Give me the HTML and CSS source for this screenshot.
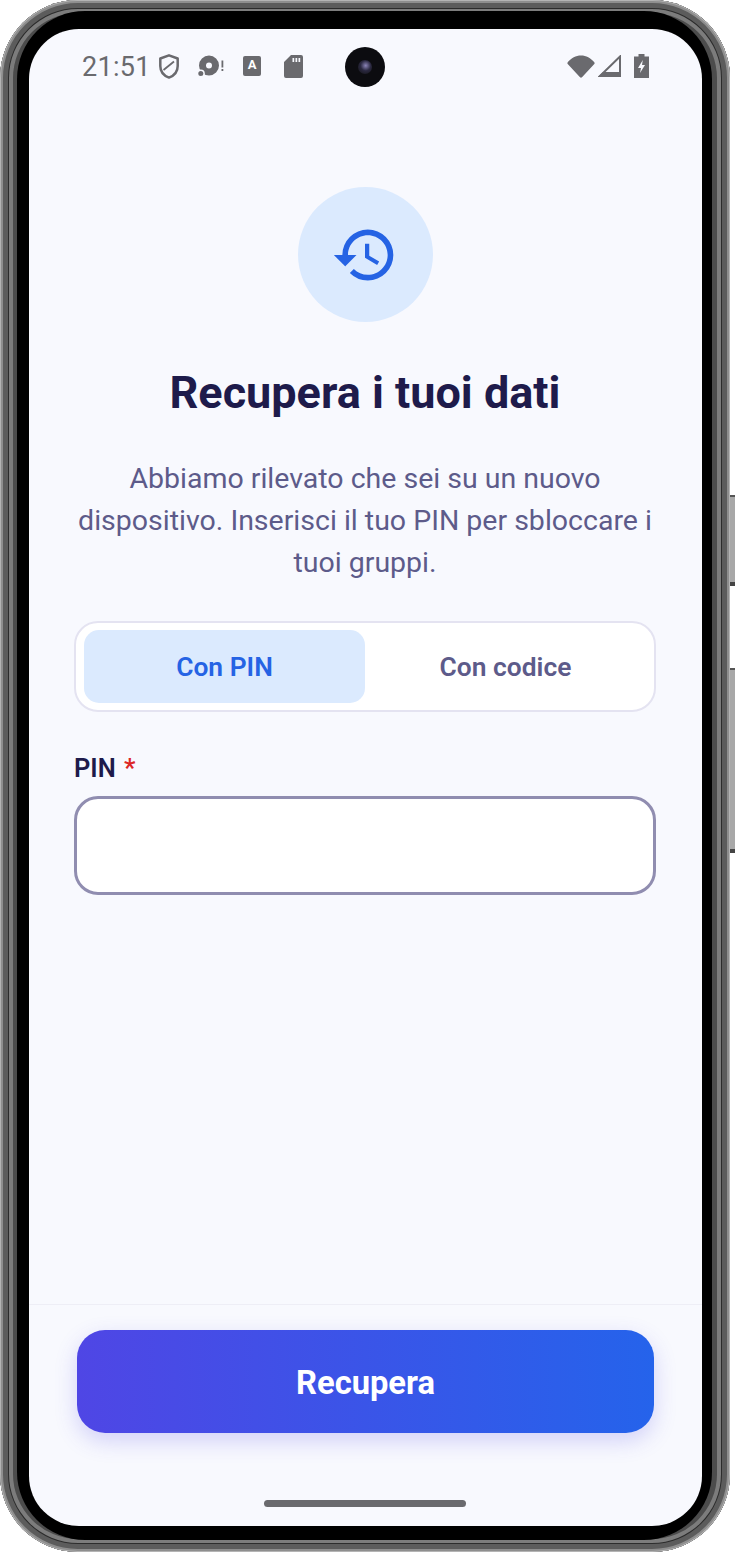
FILE: index.html
```html
<!DOCTYPE html>
<html lang="it">
<head>
<meta charset="utf-8">
<title>Recupera i tuoi dati</title>
<link rel="stylesheet" href="styles.css">
</head>
<body>
<div class="phone">
  <span class="side-btn side-btn-power"></span>
  <span class="side-btn side-btn-volume"></span>
  <div class="bezel">
    <div class="screen">
      <span class="camera"><span class="lens"></span></span>
      <header class="statusbar">
        <div class="status-left">
          <span class="time">21:51</span>
          <svg class="si si-shield" viewBox="0 0 20 25"><path d="M10 1.300 18.700 4.500V12c0 5.600-3.600 9.700-8.700 11.600C4.900 21.700 1.300 17.600 1.300 12V4.500Z" fill="none" stroke="#6a6a6e" stroke-width="2.500" stroke-linejoin="round"/><path d="M4.500 16 15 7.500" stroke="#6a6a6e" stroke-width="1.800" fill="none"/></svg>
          <svg class="si si-disc" viewBox="0 0 26 24"><path fill-rule="evenodd" d="M11 1.500a10 10 0 1 1 0 20 10 10 0 0 1 0-20Zm0 7a3 3 0 1 0 0 6 3 3 0 0 0 0-6Z" fill="#6a6a6e"/><circle cx="2.800" cy="19.500" r="4" fill="#f8f9fe"/><circle cx="2.800" cy="19.500" r="2.500" fill="#6a6a6e"/><rect x="23.500" y="6.500" width="1.800" height="7" fill="#6a6a6e"/><rect x="23.500" y="15" width="1.800" height="2" fill="#6a6a6e"/></svg>
          <span class="si-a">A</span>
          <svg class="si si-sd" viewBox="0 0 19 23"><path fill="#6a6a6e" fill-rule="evenodd" d="M7 0h10a2 2 0 0 1 2 2v19a2 2 0 0 1-2 2H2a2 2 0 0 1-2-2V7Zm1.500 3v4h1.700V3Zm3 0v4h1.700V3Zm3 0v4h1.700V3Z"/></svg>
        </div>
        <div class="status-right">
          <svg class="si si-wifi" viewBox="0 0 28 23"><path d="M.7 7.200C4.300 3 8.800.5 14 .5s9.700 2.500 13.300 6.700c.5.600.5 1.200 0 1.800L15 22.200c-.5.600-1.500.6-2 0L.7 9c-.5-.6-.5-1.200 0-1.800Z" fill="#6a6a6e"/></svg>
          <svg class="si si-signal" viewBox="0 0 23 22"><path d="M2 21 22 1.500V21Z" fill="none" stroke="#6a6a6e" stroke-width="2"/><path d="M0 22h23v-5H5Z" fill="#6a6a6e"/></svg>
          <svg class="si si-battery" viewBox="0 0 15 24"><path fill="#6a6a6e" fill-rule="evenodd" d="M4.500 0h6v2.500H15V24H0V2.500h4.500ZM8.800 6 4 14h3l-1 5 5-8H8Z"/></svg>
        </div>
      </header>

      <main class="content">
        <div class="hero-icon">
          <svg viewBox="0 0 24 24" class="history"><path fill="#2563e4" d="M13 3a9 9 0 0 0-9 9H1l3.890 3.890.07.14L9 12H6c0-3.870 3.130-7 7-7s7 3.130 7 7-3.130 7-7 7c-1.930 0-3.680-.79-4.940-2.060l-1.420 1.420A8.954 8.954 0 0 0 13 21a9 9 0 0 0 0-18zm-1 5v5l4.280 2.540.72-1.210-3.500-2.080V8H12z"/></svg>
        </div>
        <h1 class="title">Recupera i tuoi dati</h1>
        <p class="desc">Abbiamo rilevato che sei su un nuovo dispositivo. Inserisci il tuo PIN per sbloccare i tuoi gruppi.</p>
        <div class="tabs">
          <div class="tab tab-active">Con PIN</div>
          <div class="tab">Con codice</div>
        </div>
        <label class="field-label" for="pin">PIN <span class="req">*</span></label>
        <input id="pin" class="field-input" type="text">
      </main>

      <footer class="footer">
        <button class="cta" type="button">Recupera</button>
        <span class="home-bar"></span>
      </footer>
    </div>
  </div>
</div>
</body>
</html>
```

FILE: styles.css
```css
* { box-sizing: border-box; }
html, body { margin: 0; padding: 0; background: #fff; }
body { width: 735px; height: 1553px; overflow: hidden; font-family: Roboto, "Liberation Sans", sans-serif; }

.phone {
  position: relative;
  width: 730px;
  height: 1552px;
  padding: 11px 18px 12px 17px;
  border-radius: 78px;
  background: #4c4c4c;
  box-shadow:
    inset 0 0 0 1px #b4b4b4,
    inset 0 0 0 3px #8e8e8e,
    inset 0 0 0 8px #5c5c5c,
    inset 0 0 0 9px #2c2c2c,
    inset 0 0 0 13px #7c7c7c;
}
.side-btn {
  position: absolute;
  left: 730px;
  width: 5px;
  background: #a8a8a8;
  border-top: 2px solid #555;
  border-bottom: 4px solid #444;
}
.side-btn-power { top: 495px; height: 91px; }
.side-btn-volume { top: 668px; height: 185px; }

.bezel {
  height: 100%;
  padding: 18px 10px 14px 12px;
  border-radius: 68px;
  background: #000;
}
.screen {
  position: relative;
  display: flex;
  flex-direction: column;
  height: 100%;
  border-radius: 50px;
  background: #f8f9fe;
  overflow: hidden;
}
.camera {
  position: absolute;
  top: 18px;
  left: 316px;
  width: 40px;
  height: 40px;
  border-radius: 50%;
  background: #0c0c10;
  display: flex;
  align-items: center;
  justify-content: center;
}
.lens {
  width: 14px;
  height: 14px;
  border-radius: 50%;
  background: radial-gradient(circle at 55% 40%, #8b84b8 0, #2a2840 45%, #111 100%);
}

.statusbar {
  display: flex;
  justify-content: space-between;
  align-items: flex-start;
  height: 76px;
  padding: 21px 53px 0 53px;
}
.status-left, .status-right { display: flex; align-items: center; height: 32px; }
.time { width: 64px; padding-top: 1px; font-size: 27px; color: #6a6a6e; line-height: 32px; letter-spacing: .3px; }
.si { display: block; flex: none; }
.si-shield { width: 20px; height: 25px; margin-left: 13px; }
.si-disc { width: 26px; height: 24px; margin-left: 19px; }
.si-a {
  width: 18px;
  height: 20px;
  margin-left: 19px;
  border-radius: 2px;
  background: #6a6a6e;
  color: #fff;
  font-size: 13px;
  font-weight: 700;
  line-height: 18px;
  text-align: center;
}
.si-sd { width: 19px; height: 23px; margin-left: 23px; }
.si-wifi { width: 28px; height: 23px; }
.si-signal { width: 23px; height: 22px; margin-left: 3px; }
.si-battery { width: 15px; height: 24px; margin-left: 13px; }

.content {
  display: flex;
  flex-direction: column;
  flex: 1;
  align-items: center;
  padding: 82px 46px 0 45px;
}
.hero-icon {
  display: flex;
  align-items: center;
  justify-content: center;
  flex: none;
  width: 135px;
  height: 135px;
  border-radius: 50%;
  background: #dbeafe;
}
.history { width: 68px; height: 68px; margin-left: -1px; }
.title {
  margin: 43px 0 0;
  font-size: 45px;
  line-height: 56px;
  font-weight: 700;
  color: #1e1b4b;
  text-align: center;
  white-space: nowrap;
}
.desc {
  margin: 37px 0 0;
  font-size: 28.500px;
  line-height: 42px;
  color: #5d5b8a;
  text-align: center;
}
.tabs {
  display: flex;
  width: 100%;
  height: 91px;
  margin-top: 37px;
  padding: 7px 8px;
  border: 2px solid #e4e3f1;
  border-radius: 24px;
  background: #fff;
}
.tab {
  flex: 1;
  display: flex;
  align-items: center;
  justify-content: center;
  border-radius: 15px;
  font-size: 26.400px;
  font-weight: 600;
  color: #5d5b8a;
}
.tab-active { background: #dbeafe; color: #2563e4; }
.field-label {
  align-self: flex-start;
  margin-top: 39px;
  font-size: 25.500px;
  line-height: 34px;
  font-weight: 600;
  color: #1e1b4b;
  word-spacing: 2px;
}
.req { color: #dc2626; }
.field-input {
  display: block;
  width: 100%;
  height: 99px;
  margin-top: 11px;
  border: 3px solid #908db0;
  border-radius: 24px;
  background: #fff;
  outline: none;
}

.footer {
  position: relative;
  flex: none;
  height: 222px;
  padding: 25px 48px 0;
  border-top: 1px solid #eeeef6;
}
.cta {
  display: block;
  width: 100%;
  height: 103px;
  padding: 2px 0 0;
  border: 0;
  border-radius: 28px;
  background: linear-gradient(90deg, #4f46e5, #2563eb);
  box-shadow: 0 8px 22px rgba(79, 70, 229, .22);
  color: #fff;
  font-family: inherit;
  font-size: 32.700px;
  font-weight: 700;
}
.home-bar {
  position: absolute;
  left: 235px;
  bottom: 19px;
  width: 202px;
  height: 7px;
  border-radius: 4px;
  background: #6a6a6e;
}
```
